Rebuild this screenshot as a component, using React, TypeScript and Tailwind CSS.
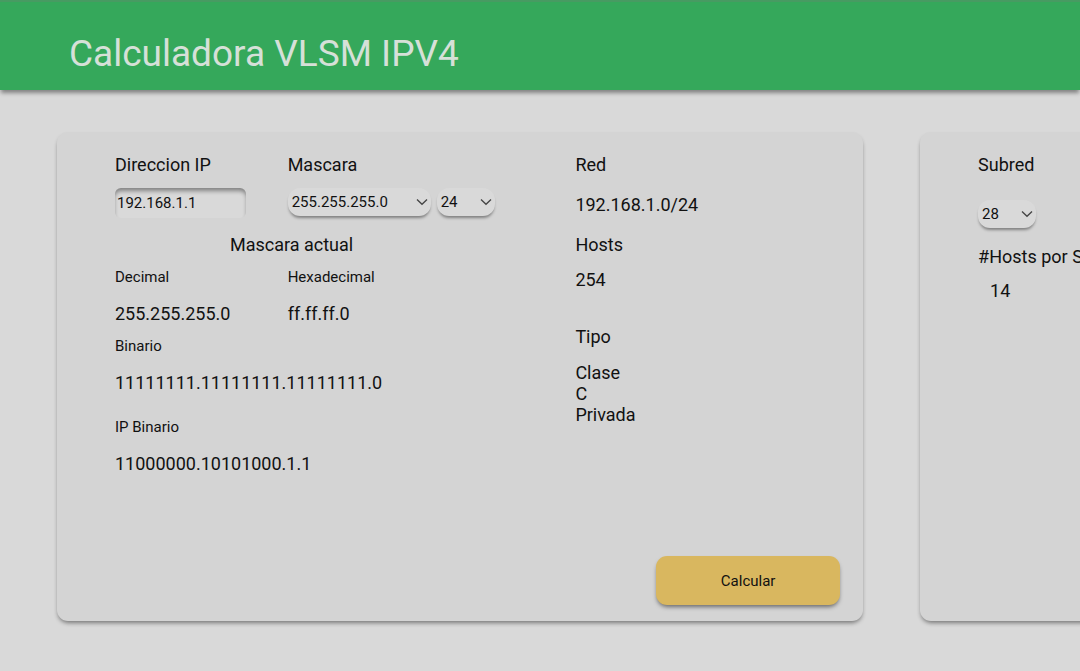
import { useState, type ReactNode } from "react";

type SelectProps = {
  id: string;
  label?: string;
  options: string[];
  initial: string;
  className: string;
};

function Select({ id, label, options, initial, className }: SelectProps) {
  const [value, setValue] = useState(initial);
  return (
    <span className={`relative inline-flex ${className}`}>
      <select
        id={id}
        aria-label={label}
        value={value}
        onChange={(e) => setValue(e.target.value)}
        className="h-7 w-full appearance-none rounded-xl bg-[#d9d9d9] pr-5 pl-1 text-[15px] leading-5 shadow-[0_3px_3px_-1px_rgba(0,0,0,0.4)] outline-none"
      >
        {options.map((o) => (
          <option key={o}>{o}</option>
        ))}
      </select>
      <svg
        viewBox="0 0 12 8"
        className="pointer-events-none absolute top-[10px] right-[3px] h-2 w-3 fill-none stroke-[#444]"
        strokeWidth="1.3"
      >
        <path d="M1 1.5 L6 6.3 L11 1.5" />
      </svg>
    </span>
  );
}

function Card({ children }: { children: ReactNode }) {
  return (
    <section className="flex min-h-[489px] w-[78.8%] shrink-0 flex-col rounded-[11px] bg-[#d4d4d4] pt-[22px] pl-[58px] shadow-[0_3px_4px_-1px_rgba(0,0,0,0.45)]">
      {children}
    </section>
  );
}

function Field({ title, value }: { title: string; value: string }) {
  return (
    <div>
      <h3 className="text-[15px] leading-[18px]">{title}</h3>
      <p className="mt-[17px]">{value}</p>
    </div>
  );
}

const masks = ["255.0.0.0", "255.255.0.0", "255.255.255.0"];
const prefixes = ["8", "16", "24", "28", "30"];

export default function App() {
  const [ip, setIp] = useState("192.168.1.1");
  return (
    <div className="min-h-screen overflow-x-hidden bg-[#d9d9d9] font-['Roboto',sans-serif] text-[18px] leading-[22px] text-[#111]">
      <header className="border-t-2 border-[#479b62] bg-[#35a85b] pt-[30px] pb-[14px] pl-[69px] shadow-[0_4px_4px_-1px_rgba(0,0,0,0.4)]">
        <h1 className="text-[37px] leading-[44px] text-[#d6e0d8]">Calculadora VLSM IPV4</h1>
      </header>
      <main className="flex gap-[57px] pt-[42px] pb-[50px] pl-[57px]">
        <Card>
          <div className="grid grid-cols-[8fr_5fr]">
            <div>
              <div className="grid grid-cols-[3fr_5fr]">
                <div className="flex flex-col items-start gap-3">
                  <label htmlFor="ip">Direccion IP</label>
                  <input
                    id="ip"
                    value={ip}
                    onChange={(e) => setIp(e.target.value)}
                    className="h-[30px] w-[131px] rounded-md bg-[#d9d9d9] px-[2px] text-[15px] leading-5 shadow-[inset_0_4px_4px_-1px_rgba(0,0,0,0.4)] outline-none"
                  />
                </div>
                <div className="flex flex-col gap-3">
                  <label htmlFor="mask">Mascara</label>
                  <div className="flex gap-[6px]">
                    <Select id="mask" options={masks} initial="255.255.255.0" className="w-[143px]" />
                    <Select id="prefix" label="Prefijo" options={prefixes} initial="24" className="w-[58px]" />
                  </div>
                </div>
              </div>
              <h2 className="mt-4 pl-[115px]">Mascara actual</h2>
              <div className="mt-3 grid grid-cols-[3fr_5fr]">
                <Field title="Decimal" value="255.255.255.0" />
                <Field title="Hexadecimal" value="ff.ff.ff.0" />
              </div>
              <div className="mt-3 flex flex-col gap-6">
                <Field title="Binario" value="11111111.11111111.11111111.0" />
                <Field title="IP Binario" value="11000000.10101000.1.1" />
              </div>
            </div>
            <div>
              <h2>Red</h2>
              <p className="mt-[18px]">192.168.1.0/24</p>
              <h2 className="mt-[18px]">Hosts</h2>
              <p className="mt-[13px]">254</p>
              <h2 className="mt-[35px]">Tipo</h2>
              <p className="mt-[14px] leading-[21px]">
                Clase
                <br />C<br />
                Privada
              </p>
            </div>
          </div>
          <div className="mt-auto flex justify-end pr-[23px] pb-4">
            <button
              type="button"
              className="h-[49px] w-[184px] rounded-[11px] bg-[#d9b75f] text-[15px] leading-5 shadow-[0_3px_4px_-1px_rgba(0,0,0,0.5)]"
            >
              Calcular
            </button>
          </div>
        </Card>
        <Card>
          <label htmlFor="subnet">Subred</label>
          <Select id="subnet" options={prefixes} initial="28" className="mt-6 w-[58px]" />
          <h2 className="mt-[18px]">#Hosts por Subred</h2>
          <p className="mt-3 pl-3">14</p>
        </Card>
      </main>
    </div>
  );
}
